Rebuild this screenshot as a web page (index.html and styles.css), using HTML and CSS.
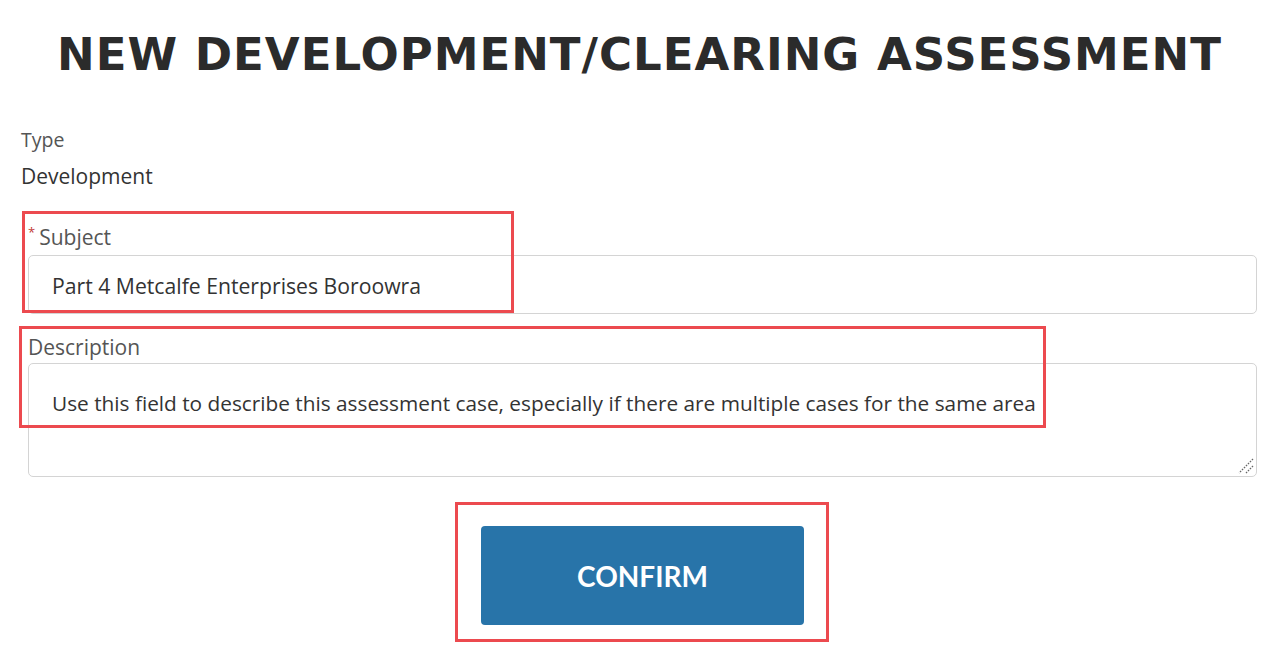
FILE: index.html
```html
<!DOCTYPE html>
<html>
<head>
<meta charset="utf-8">
<link rel="stylesheet" href="styles.css">
</head>
<body>
<div class="page">
  <h1 class="title">NEW DEVELOPMENT/CLEARING ASSESSMENT</h1>
  <div class="static">
    <div class="static-label">Type</div>
    <div class="static-value">Development</div>
  </div>
  <div class="field field-subject">
    <label class="label label-req"><span class="req">*</span>Subject</label>
    <div class="input">Part 4 Metcalfe Enterprises Boroowra</div>
  </div>
  <div class="field field-desc">
    <label class="label">Description</label>
    <div class="textarea">Use this field to describe this assessment case, especially if there are multiple cases for the same area
      <svg class="grip" width="18" height="18" viewBox="0 0 18 18"><path d="M17 3 L3 17 M17 10 L10 17" stroke="#666" stroke-width="1.3" stroke-dasharray="1.6 1.2"/></svg>
    </div>
  </div>
  <div class="actions">
    <button class="btn">CONFIRM</button>
  </div>
  <div class="mark mark-subject"></div>
  <div class="mark mark-desc"></div>
  <div class="mark mark-btn"></div>
</div>
</body>
</html>
```
FILE: styles.css
```css
html, body {
  margin: 0;
  padding: 0;
  background: #fff;
}
.page {
  position: relative;
  width: 1279px;
  height: 646px;
  overflow: hidden;
  font-family: "Open Sans", "Liberation Sans", sans-serif;
  color: #333;
}
.title {
  margin: 0;
  padding-top: 27px;
  height: 56px;
  line-height: 56px;
  text-align: center;
  font-family: "DejaVu Sans", sans-serif;
  font-weight: bold;
  font-size: 45px;
  letter-spacing: 1px;
  color: #2b2b2b;
}
.static {
  padding-left: 21px;
  margin-top: 43px;
}
.static-label {
  font-size: 19.5px;
  line-height: 28px;
  color: #555;
}
.static-value {
  margin-top: 8px;
  font-size: 21px;
  line-height: 28px;
  color: #333;
}
.field {
  padding-left: 28px;
  padding-right: 22px;
}
.field-subject {
  margin-top: 33px;
}
.field-desc {
  margin-top: 19px;
}
.label {
  display: block;
  font-size: 21px;
  line-height: 28px;
  color: #555;
}
.req {
  color: #c23934;
  font-size: 13px;
  line-height: 13px;
  vertical-align: top;
  position: relative;
  top: 3px;
  margin-right: 4px;
}
.input {
  margin-top: 4px;
  height: 59px;
  box-sizing: border-box;
  border: 1px solid #d4d4d4;
  border-radius: 5px;
  padding-left: 23px;
  padding-top: 2px;
  line-height: 55px;
  font-size: 21.2px;
  color: #333;
}
.textarea {
  position: relative;
  margin-top: 2px;
  height: 114px;
  box-sizing: border-box;
  border: 1px solid #d4d4d4;
  border-radius: 5px;
  padding: 24px 23px 0;
  line-height: 30px;
  font-size: 20.8px;
  color: #333;
}
.grip {
  position: absolute;
  right: 2px;
  bottom: 2px;
}
.actions {
  display: flex;
  justify-content: center;
  margin-top: 49px;
  padding-left: 6px;
}
.btn {
  width: 323px;
  height: 99px;
  border: none;
  border-radius: 4px;
  background: #2874a9;
  color: #fff;
  font-family: "Lato", sans-serif;
  font-weight: bold;
  font-size: 28px;
}
.mark {
  position: absolute;
  border: 3px solid #ec4a4f;
  box-sizing: border-box;
}
.mark-subject {
  left: 22px;
  top: 211px;
  width: 492px;
  height: 102px;
}
.mark-desc {
  left: 19px;
  top: 326px;
  width: 1027px;
  height: 102px;
}
.mark-btn {
  left: 455px;
  top: 502px;
  width: 374px;
  height: 140px;
}
```
